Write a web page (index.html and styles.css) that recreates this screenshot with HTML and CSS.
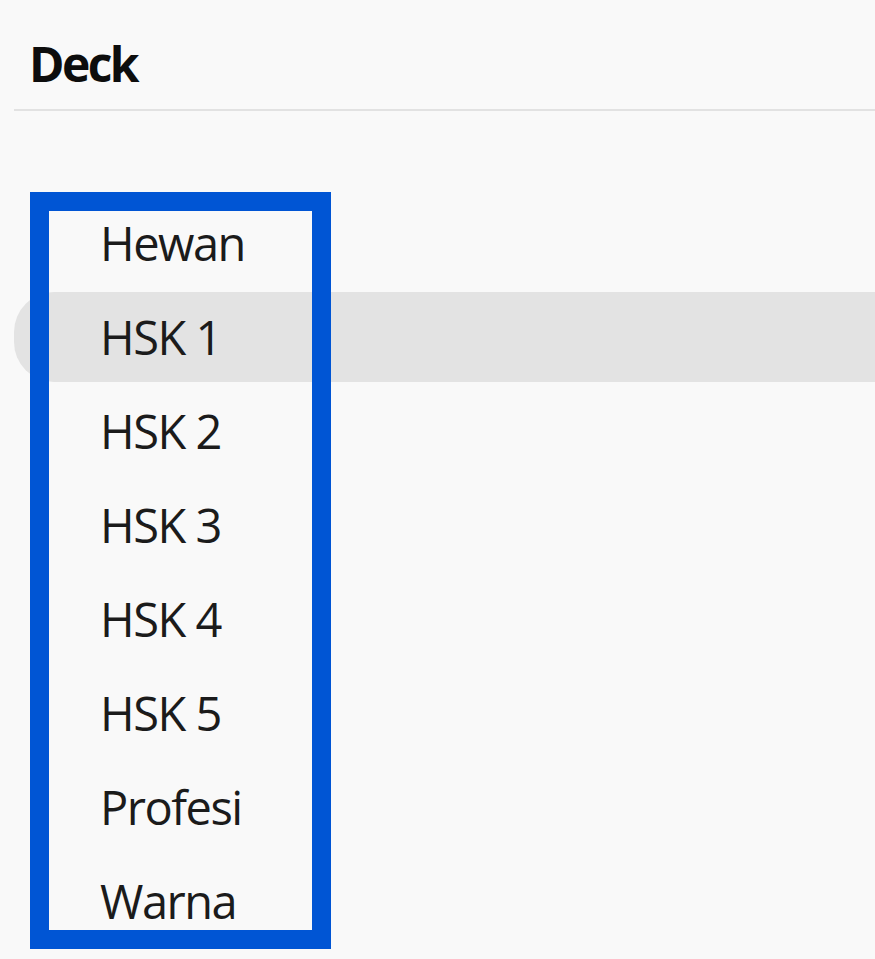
FILE: index.html
```html
<!DOCTYPE html>
<html lang="id">
<head>
<meta charset="utf-8">
<title>Deck</title>
<link rel="stylesheet" href="styles.css">
</head>
<body>
<div class="panel">
  <div class="header">Deck</div>
  <div class="divider"></div>
  <ul class="list">
    <li class="item">Hewan</li>
    <li class="item selected">HSK 1</li>
    <li class="item">HSK 2</li>
    <li class="item">HSK 3</li>
    <li class="item">HSK 4</li>
    <li class="item">HSK 5</li>
    <li class="item">Profesi</li>
    <li class="item">Warna</li>
  </ul>
  <div class="highlight-box"></div>
</div>
</body>
</html>
```

FILE: styles.css
```css
html, body {
  margin: 0;
  padding: 0;
  background: #f9f9f9;
}

body {
  font-family: "Open Sans", "Noto Sans", sans-serif;
  color: #1b1b1b;
  width: 875px;
  height: 959px;
  overflow: hidden;
}

.panel {
  position: relative;
  height: 959px;
}

.header {
  font-size: 48px;
  line-height: 48px;
  font-weight: 700;
  color: #0d0d0d;
  padding: 40px 0 21px 29px;
  letter-spacing: -2.6px;
}

.divider {
  height: 2px;
  margin-left: 14px;
  background: #e2e2e2;
}

.list {
  list-style: none;
  display: flex;
  flex-direction: column;
  margin: 85px 0 0 0;
  padding: 0;
}

.item {
  margin: 2px 0 2px 14px;
  height: 90px;
  line-height: 90px;
  font-size: 47px;
  padding-left: 86px;
  letter-spacing: -1.5px;
  border-radius: 40px 0 0 40px;
}

.item.selected {
  background: #e3e3e3;
}

.highlight-box {
  position: absolute;
  left: 30px;
  top: 192px;
  width: 263px;
  height: 719px;
  border: 19px solid #0055d4;
}
```
